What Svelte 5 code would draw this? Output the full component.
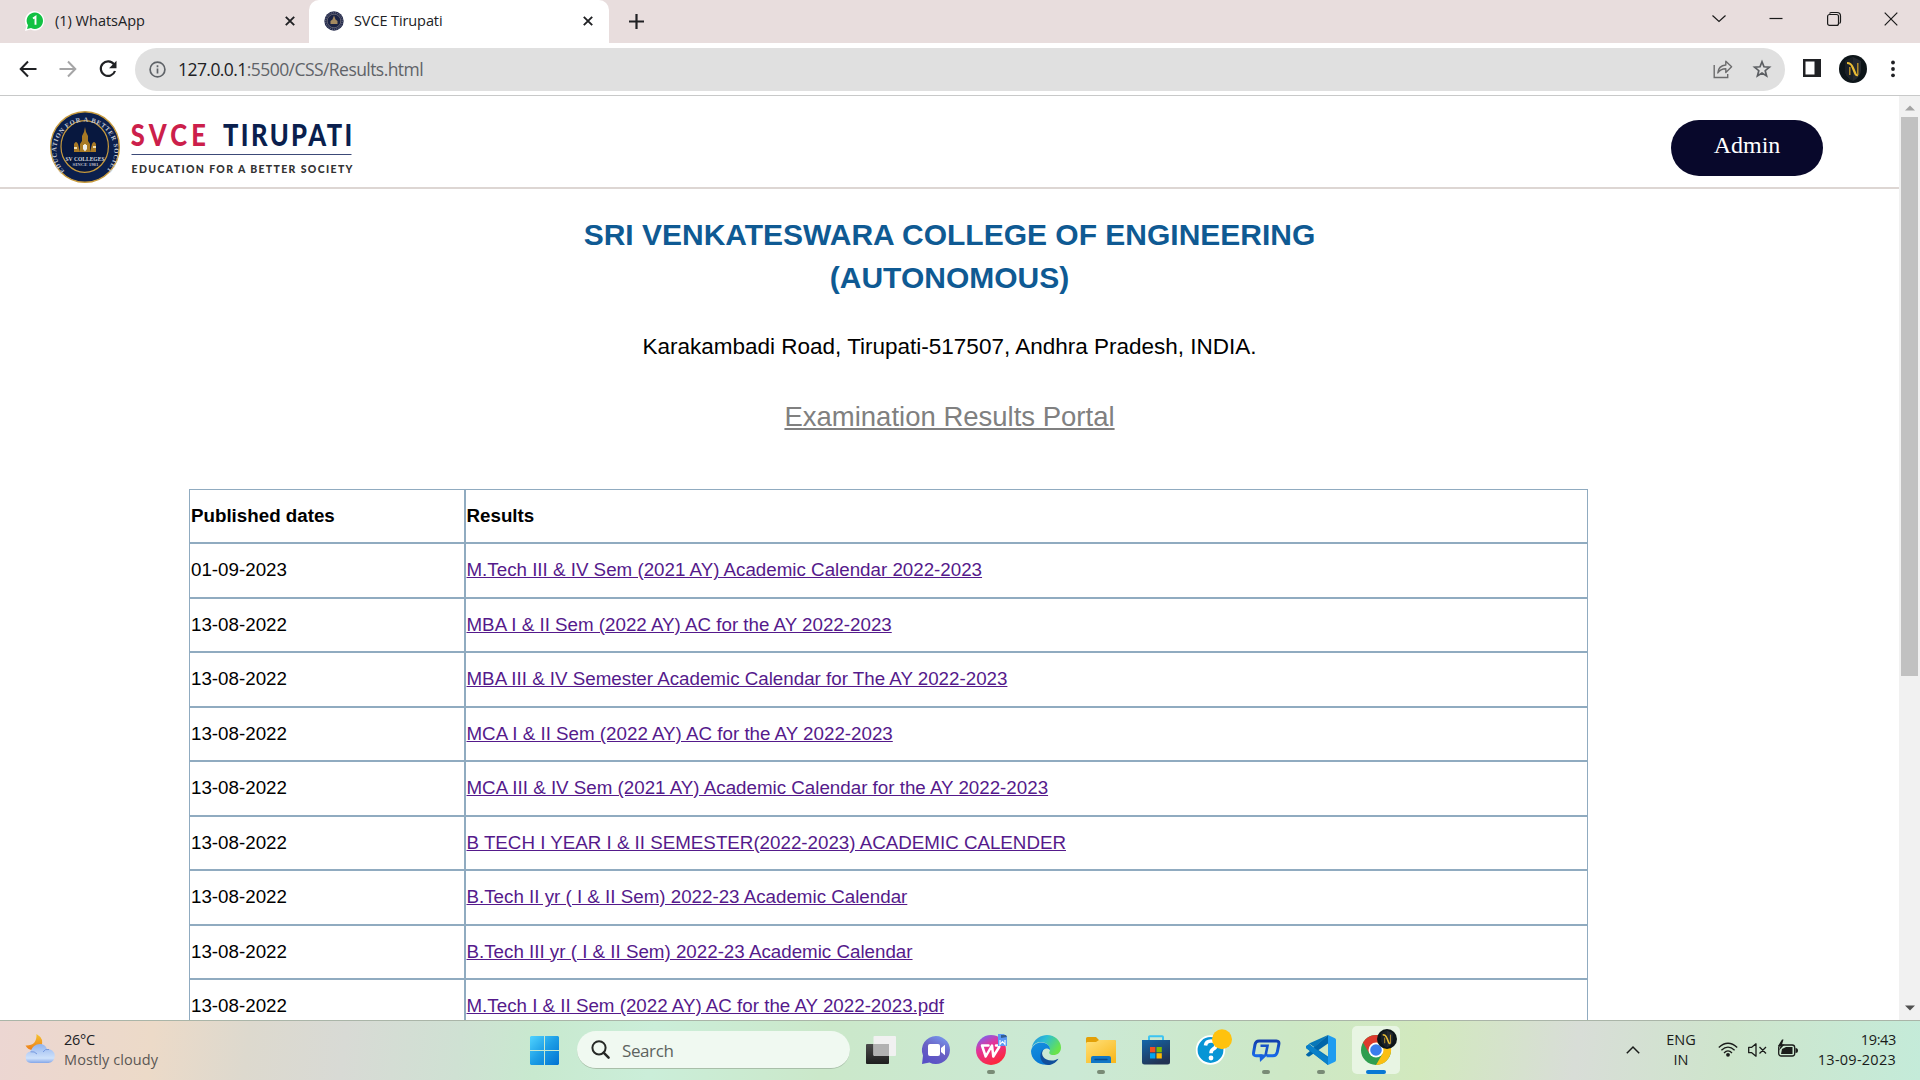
<script>
  const rows = [
    ['01-09-2023', 'M.Tech III & IV Sem (2021 AY) Academic Calendar 2022-2023'],
    ['13-08-2022', 'MBA I & II Sem (2022 AY) AC for the AY 2022-2023'],
    ['13-08-2022', 'MBA III & IV Semester Academic Calendar for The AY 2022-2023'],
    ['13-08-2022', 'MCA I & II Sem (2022 AY) AC for the AY 2022-2023'],
    ['13-08-2022', 'MCA III & IV Sem (2021 AY) Academic Calendar for the AY 2022-2023'],
    ['13-08-2022', 'B TECH I YEAR I & II SEMESTER(2022-2023) ACADEMIC CALENDER'],
    ['13-08-2022', 'B.Tech II yr ( I & II Sem) 2022-23 Academic Calendar'],
    ['13-08-2022', 'B.Tech III yr ( I & II Sem) 2022-23 Academic Calendar'],
    ['13-08-2022', 'M.Tech I & II Sem (2022 AY) AC for the AY 2022-2023.pdf']
  ];
</script>

{#snippet close()}
  <svg class="x" width="10" height="10" viewBox="0 0 10 10"><path d="M.8.8l8.4 8.4M9.2.8L.8 9.2" stroke="#202124" stroke-width="1.9" /></svg>
{/snippet}

{#snippet shield()}
  <circle cx="14" cy="14" r="14" fill="#0d1519" />
  <path d="M14 2l8 4v9q0 7-8 11q-8-4-8-11V6z" fill="#252a30" />
  <path d="M14 2v24q-8-4-8-11V6z" fill="#1a2027" />
  <path d="M8 8q4 0 5.500 4l3 7q.8 1.500 2.300 1" stroke="#e9bd35" stroke-width="2.200" fill="none" />
  <path d="M10.800 12v8M18.800 8v12" stroke="#c99c2b" stroke-width="1.300" />
{/snippet}

<div class="screen">
  <div class="tabs">
    <div class="tab">
      <svg width="20" height="20" viewBox="0 0 20 20"><path d="M0 20l1.400-5A9.700 9.700 0 1 1 5.500 18.600z" fill="#fff" /><path d="M2 18l1-3.700A8.200 8.200 0 1 1 6 17z" fill="#12c143" /><path d="M8 7.500l2.500-1.700v8" stroke="#fff" stroke-width="1.900" fill="none" /></svg>
      <span class="t1">(1) WhatsApp</span>
      {@render close()}
    </div>
    <div class="tab active">
      <svg width="20" height="20" viewBox="0 0 20 20"><circle cx="10" cy="10" r="9.700" fill="#252b4b" /><circle cx="10" cy="10" r="6.800" fill="#1b2344" stroke="#6f6d79" stroke-width=".8" /><circle cx="10" cy="10" r="8.300" fill="none" stroke="#777b91" stroke-width="1" stroke-dasharray="1 1" /><path d="M10 4.500l1.500 4 2 1.500v3h-7v-3l2-1.500z" fill="#a58a60" /></svg>
      <span class="t2">SVCE Tirupati</span>
      {@render close()}
    </div>
    <svg class="plus" width="15" height="15" viewBox="0 0 15 15"><path d="M7.500 0v15M0 7.500h15" stroke="#202124" stroke-width="2.200" /></svg>
    <div class="win">
      <svg width="14" height="14" viewBox="0 0 14 14"><path d="M.5 3.500l6.500 6 6.500-6" /></svg>
      <svg width="14" height="14" viewBox="0 0 14 14"><path d="M.5 6.500h13" /></svg>
      <svg width="14" height="14" viewBox="0 0 14 14"><rect x=".6" y="2.500" width="10.900" height="10.900" rx="2" /><path d="M2.500 1.500q.6-1 2-1H10q3.500 0 3.500 3.500v5.500q0 1.400-1 2" /></svg>
      <svg width="14" height="14" viewBox="0 0 14 14"><path d="M.7.7l12.600 12.600M13.300.7L.7 13.300" /></svg>
    </div>
  </div>

  <div class="toolbar">
    <svg class="back" width="18" height="18" viewBox="0 0 18 18"><path d="M17.500 9H2M9 1.500L1.700 9 9 16.500" stroke="#202124" stroke-width="2" fill="none" /></svg>
    <svg class="fwd" width="18" height="18" viewBox="0 0 18 18"><path d="M.5 9H16M9 1.500L16.300 9 9 16.500" stroke="#a5a5a6" stroke-width="2" fill="none" /></svg>
    <svg class="reload" width="18" height="18" viewBox="0 0 18 18"><path d="M15 4.300A7.300 7.300 0 1 0 16 11" stroke="#202124" stroke-width="2.200" fill="none" /><path d="M17.500.8v7.400h-7.400z" fill="#202124" /></svg>
    <div class="omni">
      <svg width="17" height="17" viewBox="0 0 17 17"><circle cx="8.500" cy="8.500" r="7.400" fill="none" stroke="#5f6368" stroke-width="1.700" /><path d="M8.500 7.500v5M8.500 4.200v2" stroke="#5f6368" stroke-width="1.700" /></svg>
      <span class="url"><b>127.0.0.1</b>:5500/CSS/Results.html</span>
      <svg class="share" width="20" height="19" viewBox="0 0 20 19"><path d="M1.200 5v12.500h13.500V14" fill="none" stroke="#6c6c6d" stroke-width="1.400" /><path d="M4.800 13q.5-7.300 8-8V1.200l5.800 5.600-5.800 5.600V8.700q-5.500 0-8 4.300z" fill="none" stroke="#6c6c6d" stroke-width="1.400" stroke-linejoin="round" /></svg>
      <svg class="star" width="18" height="18" viewBox="0 0 18 18"><path d="M9 1.800l2 5 5.400.4-4.200 3.500 1.400 5.300L9 13.100 4.400 16l1.400-5.300-4.200-3.500 5.400-.4z" fill="none" stroke="#5b5e62" stroke-width="1.700" /></svg>
    </div>
    <svg class="panel" width="18" height="18" viewBox="0 0 18 18"><path d="M0 0h18v18H0zM2.500 2.500v13h9v-13z" fill="#202124" fill-rule="evenodd" /></svg>
    <svg class="avatar" width="28" height="28" viewBox="0 0 28 28">{@render shield()}</svg>
    <svg class="dots" width="4" height="18" viewBox="0 0 4 18"><circle cx="2" cy="2.500" r="1.900" /><circle cx="2" cy="9" r="1.900" /><circle cx="2" cy="15.300" r="1.900" /></svg>
  </div>

  <div class="view">
    <main>
      <header>
        <svg class="logo" width="304" height="74" viewBox="0 0 304 74">
          <defs>
            <path id="arc" d="M14.500 61A29 29 0 1 1 56 61" />
          </defs>
          <ellipse cx="35" cy="37" rx="34.300" ry="35.300" fill="#0b1f4d" stroke="#c79a3c" stroke-width="1.400" />
          <ellipse cx="34.700" cy="36.500" rx="23.700" ry="25.800" fill="#08183f" stroke="#c79a3c" stroke-width="1.200" />
          <text class="ring"><textPath href="#arc" textLength="140" lengthAdjust="spacing">EDUCATION FOR A BETTER SOCIETY</textPath></text>
          <path d="M35 17l1 5 2 4v5l2 3v8H30v-8l2-3v-5l2-4z" fill="#a87925" />
          <path d="M24 34q2-4 4 0l2 8h-6zM46 34q-2-4-4 0l-2 8h6z" fill="#a87925" />
          <path d="M24 38h3M43 37h3M35 34v6" stroke="#f1dfb0" stroke-width="2" />
          <path d="M33 35h4v4l-2 2.500-2-2.500z" fill="#eee" />
          <text class="seal" x="15.500" y="51" textLength="39" lengthAdjust="spacingAndGlyphs">SV COLLEGES</text>
          <text class="since" x="22.500" y="56.300" textLength="26" lengthAdjust="spacingAndGlyphs">SINCE 1981</text>
          <g transform="scale(.85 1)">
            <text class="brand red" x="95" y="36" textLength="88.500" lengthAdjust="spacing">SVCE</text>
            <text class="brand" x="203.500" y="36" textLength="152" lengthAdjust="spacing">TIRUPATI</text>
          </g>
          <path d="M81.500 44.500H301.500" stroke="#3c4a78" stroke-width="1" />
          <text class="tag" x="81.500" y="63.200" textLength="221" lengthAdjust="spacing">EDUCATION FOR A BETTER SOCIETY</text>
        </svg>
        <button>Admin</button>
      </header>
      <h1>SRI VENKATESWARA COLLEGE OF ENGINEERING<br />(AUTONOMOUS)</h1>
      <p class="addr">Karakambadi Road, Tirupati-517507, Andhra Pradesh, INDIA.</p>
      <p class="portal">Examination Results Portal</p>
      <div class="table">
        <div class="row head"><div>Published dates</div><div>Results</div></div>
        {#each rows as [date, title]}
          <div class="row"><div>{date}</div><div><a href="#top">{title}</a></div></div>
        {/each}
      </div>
    </main>
    <div class="scroll">
      <svg width="10" height="6" viewBox="0 0 10 6"><path d="M0 5.500L5 .5l5 5z" fill="#a3a3a3" /></svg>
      <div class="thumb"></div>
      <svg class="down" width="10" height="6" viewBox="0 0 10 6"><path d="M0 .5h10l-5 5z" fill="#505050" /></svg>
    </div>
  </div>

  <div class="taskbar">
    <div class="weather">
      <svg width="30" height="30" viewBox="0 0 30 30">
        <defs><linearGradient id="moon" x2="0" y2="1"><stop stop-color="#f5c32c" /><stop offset="1" stop-color="#ee7d1c" /></linearGradient><linearGradient id="cl" x2="0" y2="1"><stop stop-color="#93b4ee" /><stop offset=".75" stop-color="#cfe2fb" /><stop offset="1" stop-color="#84a6e8" /></linearGradient></defs>
        <path d="M11.500 0Q20 5 16 13L8 16Q3 16 .5 11.500Q12 12 11.500 0z" fill="url(#moon)" />
        <path d="M6 29A5.800 5.800 0 0 1 5.500 17.500Q8 10 15 10Q20 10 22 15A7 7 0 0 1 23.500 29z" fill="url(#cl)" />
        <path d="M5.500 17.800Q9.500 17 12 20M18 18Q20 14.500 24 15.500" stroke="#7598df" fill="none" />
      </svg>
      <div class="wt"><span>26°C</span><span class="grey">Mostly cloudy</span></div>
    </div>

    <svg class="start" width="29" height="29" viewBox="0 0 29 29"><defs><linearGradient id="wn" x2="1" y2="1"><stop stop-color="#50d3ff" /><stop offset=".5" stop-color="#1c9de5" /><stop offset="1" stop-color="#0072d2" /></linearGradient></defs><path d="M1 0h13v14H0V1zM15 0h13l1 1v13H15zM0 15h14v14H1l-1-1zM15 15h14v13l-1 1H15z" fill="url(#wn)" /></svg>
    <div class="search">
      <svg width="19" height="19" viewBox="0 0 19 19"><circle cx="8" cy="7.800" r="6.600" fill="none" stroke="#262926" stroke-width="2" /><path d="M12.600 12.600l5 5" stroke="#262926" stroke-width="2.500" stroke-linecap="round" /></svg>
      <span>Search</span>
    </div>
    <div class="apps">
      <div class="app">
        <svg width="30" height="30" viewBox="0 0 30 30"><defs><linearGradient id="tv" x2="0" y2="1"><stop stop-color="#4b4b4b" /><stop offset="1" stop-color="#1e1e1e" /></linearGradient></defs><rect y="9" width="23" height="20" rx="1" fill="url(#tv)" /><rect x="7.500" y="1" width="22.500" height="20" rx="1" fill="#f1f1f1" /><path d="M7.500 9H23v12H8.500l-1-1z" fill="#b2b2b2" /></svg>
      </div>
      <div class="app">
        <svg width="30" height="30" viewBox="0 0 30 30"><defs><linearGradient id="tm" x1=".8" x2=".3" y2="1"><stop stop-color="#7899ee" /><stop offset=".5" stop-color="#6a61c4" /><stop offset="1" stop-color="#5850c6" /></linearGradient></defs><path d="M15 1A14 14 0 1 1 8.500 27.400L1 29l1-8.500A14 14 0 0 1 15 1z" fill="url(#tm)" /><rect x="7" y="9" width="12" height="12" rx="2" fill="#fff" /><path d="M20 13l4-3.200v10.400L20 17z" fill="#fff" /></svg>
      </div>
      <div class="app run">
        <svg width="34" height="34" viewBox="-2 -2 34 34"><defs><linearGradient id="wp" x1=".1" x2=".6" y2="1"><stop stop-color="#6a6bff" /><stop offset=".4" stop-color="#e2359b" /><stop offset="1" stop-color="#ff2638" /></linearGradient></defs><circle cx="15" cy="15" r="15" fill="url(#wp)" /><path d="M12.500 10.500H6l3.700 11 6.300-11 1.300 11 5.900-9.500q.6-1.500-1.700-1.500H20" fill="none" stroke="#fff" stroke-width="2.500" stroke-linejoin="round" stroke-linecap="round" /><path d="M22-1h6l3 3v9H22z" fill="#5b9af5" /><path d="M25 0h5l1 2-6 1z" fill="#355e91" /><path d="M24 5v4.500l2.500-3 2.500 3V5" fill="none" stroke="#fff" stroke-width="1.100" /></svg>
      </div>
      <div class="app">
        <svg width="30" height="30" viewBox="0 0 30 30"><defs><linearGradient id="eg" x2="1" y2=".5"><stop stop-color="#2389d7" /><stop offset=".45" stop-color="#2dbed6" /><stop offset="1" stop-color="#69e34b" /></linearGradient><linearGradient id="eb" x2=".4" y2="1"><stop stop-color="#1590df" /><stop offset="1" stop-color="#0878d4" /></linearGradient></defs><path d="M.5 14C2 3 11 0 16 0c8 0 14 6 14 12.500 0 5-3.500 7.500-7.500 7.500-4 0-5-2-3.700-4C20 11 15 7 10 7 5 7 1.500 10 .5 14z" fill="url(#eg)" /><path d="M0 16C1 10 6 7.500 10.500 7.500c5.500 0 9 4 8.500 7.500-5-4-9 1-8 6 .8 4 4.500 8 9 8.200C9 32 0 25 0 16z" fill="url(#eb)" /><path d="M12.500 14c-4 6 1 11.500 8 11.500 3 0 5-1 7-1.800C25 28 20 30 17 30 9 29 7 19 12.500 14z" fill="#114f9b" /></svg>
      </div>
      <div class="app run">
        <svg width="30" height="30" viewBox="0 0 30 30"><defs><linearGradient id="fd" x2=".8" y2="1"><stop stop-color="#ffe07a" /><stop offset="1" stop-color="#f9b91e" /></linearGradient></defs><path d="M0 3.500Q0 2 1.500 2H10l3 3h15q2 0 2 2v5H0z" fill="#e3a008" /><path d="M0 8.500Q0 7 1.500 7H10l3-2h15.500Q30 5 30 7v21H0z" fill="url(#fd)" /><path d="M5 28v-5q0-2 2-2h16q2 0 2 2v5z" fill="#1177c6" /><path d="M9 24.500h12" stroke="#084b8f" stroke-width="1.300" stroke-linecap="round" /></svg>
      </div>
      <div class="app">
        <svg width="30" height="30" viewBox="0 0 30 30"><defs><linearGradient id="st" x2=".5" y2="1"><stop stop-color="#1367ab" /><stop offset="1" stop-color="#223354" /></linearGradient></defs><path d="M8 6V2q0-.8.8-.8h12.400q.8 0 .8.800v4" fill="none" stroke="#3bc4f2" stroke-width="1.900" /><path d="M1 5h28v22q0 2.500-2.500 2.500h-23Q1 29.500 1 27z" fill="url(#st)" /><path d="M9 12h5.300v5.300H9z" fill="#f25022" /><path d="M15.500 12h5.300v5.300h-5.300z" fill="#7fba00" /><path d="M9 18.200h5.300v5.300H9z" fill="#00a4ef" /><path d="M15.500 18.200h5.300v5.300h-5.300z" fill="#ffb900" /></svg>
      </div>
      <div class="app">
        <svg width="42" height="42" viewBox="-6 -6 42 42"><circle cx="14.500" cy="15" r="13.800" fill="#0795d5" stroke="#fff" stroke-width="1.800" /><path d="M9.500 10.500Q10 6 15 6q5 0 5 4.200 0 2.500-3 4-2 1.200-2 4" fill="none" stroke="#fff" stroke-width="3.600" /><circle cx="15" cy="23" r="2.400" fill="#fff" /><circle cx="26" cy="4.300" r="10" fill="#ffc20e" /></svg>
      </div>
      <div class="app run">
        <svg width="30" height="30" viewBox="0 0 30 30"><defs><linearGradient id="dp" x2="0" y2="1"><stop stop-color="#123fae" /><stop offset="1" stop-color="#1769e8" /></linearGradient></defs><path d="M11.500 20.800H5Q2 20.800 2.600 17.500L4 9.500Q4.700 6 8 6h17.500q3 0 2.300 3.500L26.300 17q-.8 3.800-4.300 3.800h-6.500" fill="none" stroke="url(#dp)" stroke-width="3" stroke-linejoin="round" /><path d="M9.500 10.800h7l-2 10" fill="none" stroke="#1752c8" stroke-width="2.600" /><path d="M8.500 19.500h8.500L9 27z" fill="#1762dd" /></svg>
      </div>
      <div class="app run">
        <svg width="30" height="30" viewBox="0 0 30 30"><path d="M22 0L8 13 3.300 9.300 0 11v2l22 17V21.500L3 8.500" fill="#0877b9" /><path d="M0 19.500L22 0v8.500L3.300 21.500H2L0 20z" fill="#0065a9" /><path d="M0 11.500L3 9l19 14v7L0 13z" fill="#0a80c9" /><path d="M22 0l7 3.300q1 .5 1 1.700v20q0 1.200-1 1.700L22 30z" fill="#1f9cf0" /></svg>
      </div>
      <div class="app tile run">
        <svg width="42" height="42" viewBox="-6 -6 42 42"><circle cx="15" cy="15" r="15" fill="#2f9e4f" /><path d="M15 15L2 7.500A15 15 0 0 1 28 7.500z" fill="#dd3a2d" /><path d="M15 7.500h13A15 15 0 0 1 15 30L21.500 18.800z" fill="#fbbf12" /><path d="M2 7.500L8.500 18.800 15 7.500z" fill="#dd3a2d" /><circle cx="15" cy="15" r="7.500" fill="#fff" /><circle cx="15" cy="15" r="5.800" fill="#3a7ded" /><g transform="translate(16 -6) scale(.714)">{@render shield()}</g></svg>
      </div>
    </div>

    <div class="tray">
      <svg class="up" width="14" height="8" viewBox="0 0 14 8"><path d="M.8 7.200L7 1l6.200 6.200" fill="none" stroke="#1a1c1a" stroke-width="1.500" /></svg>
      <div class="lang"><span>ENG</span><span>IN</span></div>
      <svg class="wifi" width="20" height="15" viewBox="0 0 20 15"><path d="M.8 5.500Q10-3 19.200 5.500M3.400 8.300Q10 2 16.600 8.300M6 11Q10 6.800 14 11" fill="none" stroke="#1a1c1a" stroke-width="1.300" /><circle cx="10" cy="12.800" r="1.900" fill="#1a1c1a" /></svg>
      <svg class="spk" width="19" height="14" viewBox="0 0 19 14"><path d="M.7 4.300h3L8 .8v12.400L3.700 9.700h-3zM11.500 4l6.500 6.500M18 4l-6.500 6.500" fill="none" stroke="#1a1c1a" stroke-width="1.300" stroke-linejoin="round" /></svg>
      <svg class="bat" width="20" height="17" viewBox="0 0 20 17"><rect x=".7" y="5" width="16" height="11" rx="2.500" fill="none" stroke="#1a1c1a" stroke-width="1.300" /><path d="M3 14l1-5 4-2h6.500v7zM17.500 8q2.500 0 2.500 2.500T17.500 13z" fill="#1a1c1a" /><path d="M4-.5L0 6h2.500L1 10.500 6.500 4.500H4L5.500-.5z" fill="#1a1c1a" /></svg>
      <div class="clock"><span>19:43</span><span class="date">13-09-2023</span></div>
    </div>
  </div>
</div>

<style>
  :global(body) { margin: 0; background: #fff; }
  * { box-sizing: border-box; }
  svg { display: block; flex: none; overflow: visible; }
  .screen { width: 1920px; height: 1080px; display: flex; flex-direction: column; overflow: hidden; background: #fff; font-family: "Open Sans", "Noto Sans", sans-serif; color: #202124; }

  .tabs { height: 43px; display: flex; align-items: center; background: #e8dddd; flex: none; }
  .tab { height: 43px; display: flex; align-items: center; white-space: nowrap; font-size: 14.5px; }
  .tab:first-child { width: 309px; padding: 0 14px 2px 25px; border-bottom-right-radius: 10px; }
  .tab.active { width: 300px; background: #fff; border-radius: 10px 10px 0 0; padding: 0 16px 2px 15px; }
  .tab span { margin-left: 10px; }
  .t1 { letter-spacing: 0; }
  .t2 { letter-spacing: -.1px; }
  .x { margin-left: auto; }
  .plus { margin: 0 0 1px 20px; }
  .win { margin: 0 22px 6px auto; display: flex; gap: 43.500px; }
  .win svg { fill: none; stroke: #1a1a1a; stroke-width: 1.200; }

  .toolbar { height: 53px; flex: none; display: flex; align-items: center; border-bottom: 1px solid #c8c9c9; background: #fff; }
  .back { margin-left: 18.500px; }
  .fwd { margin-left: 22px; }
  .reload { margin-left: 22px; }
  .omni { margin-left: 18.500px; width: 1650px; height: 43px; border-radius: 22px; background: #e0e0e0; display: flex; align-items: center; padding: 0 14px; }
  .url { font-size: 17.500px; margin-left: 12px; letter-spacing: -.56px; color: #5f6368; white-space: nowrap; }
  .url b { font-weight: 400; color: #202124; }
  .share { margin-left: auto; }
  .star { margin-left: 20.500px; }
  .panel { margin: 0 0 2px 18px; }
  .avatar { margin-left: 18px; }
  .dots { margin-left: 23.500px; fill: #202124; }

  .view { height: 924px; flex: none; display: flex; overflow: hidden; }
  main { width: 1899px; flex: none; font-family: "Liberation Sans", Arial, sans-serif; color: #000; }
  header { height: 93px; border-bottom: 2px solid #ddd6d3; display: flex; align-items: flex-start; justify-content: space-between; padding: 14px 76px 0 50px; }
  button { width: 152px; height: 56px; margin-top: 10px; border: 0; border-radius: 28px; background: #08082b; color: #fff; font: 24px/27px "Liberation Serif", "Times New Roman", serif; padding: 0 0 5px; }
  .ring { font: 700 6.500px "Liberation Serif", serif; fill: #c3c8d4; }
  .seal { font: 700 6px "Liberation Serif", serif; fill: #d3d6dd; }
  .since { font: 700 5px "Liberation Serif", serif; fill: #b5bac8; }
  .brand { font: 900 30px Lato, sans-serif; fill: #0a1f4e; }
  .brand.red { fill: #cc1f4b; }
  .tag { font: 900 10.500px Lato, sans-serif; fill: #333; }
  h1 { margin: 24px 0 0; font-size: 30px; line-height: 43px; text-align: center; color: #0f5a93; }
  p { margin: 0; text-align: center; }
  .addr { font-size: 22.500px; line-height: 26px; margin-top: 35px; }
  .portal { font-size: 27.500px; line-height: 32px; margin-top: 41px; color: #808080; text-decoration: underline; }
  .table { width: 1399px; margin: 56px 0 0 189px; font-size: 18.750px; }
  .row { height: 54.500px; display: flex; }
  .row.head { height: 54px; font-weight: 700; }
  .row > div { border: 1px solid #90abc0; padding: 0 1px; display: flex; align-items: center; white-space: nowrap; }
  .row > div:first-child { width: 276px; }
  .row > div:last-child { width: 1123px; padding-left: .5px; }
  a { color: #551a8b; }

  .scroll { width: 21px; background: #f1f1f1; display: flex; flex-direction: column; align-items: center; padding: 9px 0; }
  .thumb { width: 17px; height: 559px; margin-top: 6px; background: #c1c1c1; }
  .down { margin-top: auto; }

  .taskbar { height: 60px; flex: none; display: flex; align-items: flex-start; border-top: 1px solid #aab5a8; background: linear-gradient(97deg, #ecd6d2 0, #ecdac8 8%, #ddd9ce 13%, #d8dad5 18%, #cfe1d3 24%, #c8e9cf 28%, #cbeed9 34%, #cbe8ca 43%, #cbe9d5 56%, #cde8c6 67%, #d2e9be 74%, #d8ddd7 82%, #cee5cc 90%, #c4ebd9 100%); }
  .weather { width: 530px; padding: 9px 0 0 25px; display: flex; font-size: 14.500px; line-height: 20px; }
  .weather svg { margin-top: 4px; }
  .wt { display: flex; flex-direction: column; margin-left: 9px; letter-spacing: -.3px; }
  .grey { color: #5b5754; letter-spacing: .1px; }
  .start { margin-top: 15px; }
  .search { margin: 10px 0 0 18px; width: 273px; height: 38px; border-radius: 19px; background: #f0f9f1; border-bottom: 1px solid #a9bfa9; display: flex; align-items: center; padding-left: 14px; font-size: 17px; color: #5d635e; }
  .search span { margin: 2px 0 0 12px; letter-spacing: -.4px; }
  .apps { display: flex; gap: 7px; padding: 5px 0 0 7px; }
  .app { position: relative; width: 48px; height: 48px; display: flex; align-items: center; justify-content: center; flex: none; }
  .tile { background: #e8f5e3; border-radius: 5px; }
  .run::after { content: ""; position: absolute; left: 20px; bottom: 0; width: 8px; height: 4px; border-radius: 2px; background: #798b76; }
  .tile::after { left: 14px; width: 20px; background: #0878d4; }
  .tray { flex: 1; display: flex; color: #1a1c1a; font-size: 14.500px; line-height: 20px; padding: 9px 24px 0 0; }
  .tray span { display: block; }
  .up { margin: 16px 0 0 226px; }
  .lang { width: 50px; margin-left: 16px; text-align: center; }
  .wifi { margin: 12px 0 0 12px; }
  .spk { margin: 13px 0 0 10px; }
  .bat { margin: 10px 0 0 11px; }
  .clock { margin-left: auto; text-align: right; letter-spacing: -.35px; }
  .date { letter-spacing: .25px; }
</style>
